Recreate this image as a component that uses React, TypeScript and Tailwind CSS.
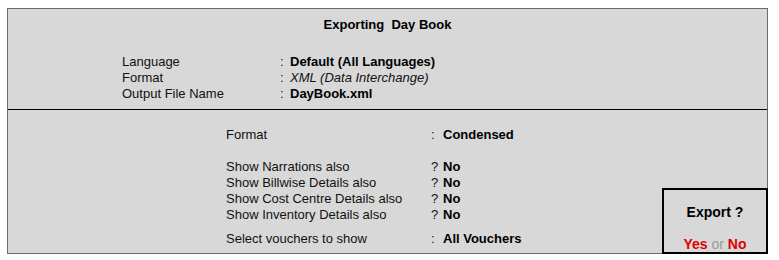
import React from "react";

const font = { fontFamily: '"Liberation Sans", Arial, sans-serif' };

function TopRow({ label, value, italic }: { label: string; value: string; italic?: boolean }) {
  return (
    <div className="flex h-[16px] leading-[16px]">
      <span className="w-[158px] text-[#111]">{label}</span>
      <span className="w-[10px] text-[#111]">:</span>
      <span className={italic ? "italic text-[#111]" : "font-bold text-black"}>{value}</span>
    </div>
  );
}

function LowRow({ label, sep, value }: { label: string; sep: string; value: string }) {
  return (
    <div className="flex h-[16px] leading-[16px]">
      <span className="w-[205px] text-[#111]">{label}</span>
      <span className="w-[12px] text-[#111]">{sep}</span>
      <span className="font-bold text-black">{value}</span>
    </div>
  );
}

export default function App() {
  return (
    <div className="w-[779px] h-[260px] bg-white pt-[8px] pl-[7px]" style={font}>
      <div className="relative w-[761px] h-[246px] border border-[#6b6b6b] bg-[#d8d8d8] text-[13px]">
        <div className="pt-[8px] text-center font-bold leading-[16px] text-black">Exporting&nbsp; Day Book</div>
        <div className="mt-[21px] pl-[114px]">
          <TopRow label="Language" value="Default (All Languages)" />
          <TopRow label="Format" value="XML (Data Interchange)" italic />
          <TopRow label="Output File Name" value="DayBook.xml" />
        </div>
        <div className="mt-[7px] h-px bg-black" />
        <div className="pt-[17px] pl-[218px]">
          <LowRow label="Format" sep=":" value="Condensed" />
          <div className="mt-[16px]">
            <LowRow label="Show Narrations also" sep="?" value="No" />
            <LowRow label="Show Billwise Details also" sep="?" value="No" />
            <LowRow label="Show Cost Centre Details also" sep="?" value="No" />
            <LowRow label="Show Inventory Details also" sep="?" value="No" />
          </div>
          <div className="mt-[8px]">
            <LowRow label="Select vouchers to show" sep=":" value="All Vouchers" />
          </div>
        </div>
        <div className="absolute left-[654px] top-[179px] w-[106px] h-[66px] box-border border-2 border-black bg-[#d8d8d8] text-center text-[14px]">
          <div className="pt-[14px] leading-[16px] font-bold text-black">Export ?</div>
          <div className="mt-[16px] leading-[16px]">
            <span className="font-bold text-[#e00000]">Yes</span>
            <span className="text-[#9a9a9a]"> or </span>
            <span className="font-bold text-[#e00000]">No</span>
          </div>
        </div>
      </div>
    </div>
  );
}
